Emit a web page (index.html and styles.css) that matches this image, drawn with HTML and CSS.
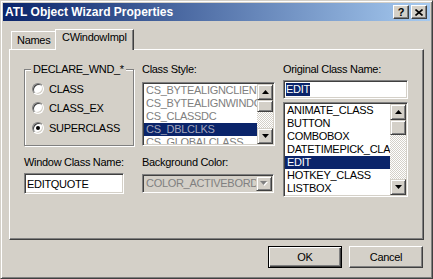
FILE: index.html
```
<!doctype html>
<html>
    <head>
        <meta name="viewport" content="width=device-width, initial-scale=1.0">
        <title>ATL Object Wizard Properties</title>
        <link rel="stylesheet" href="styles.css">
    </head>
    <body>
        <div class="window">
            <div class="titlebar">
                <span class="title">ATL Object Wizard Properties</span>
                <div class="caption-btns">
                    <span class="cap-btn">?</span>
                    <span class="cap-btn">
                        <svg width="8" height="7" viewBox="0 0 8 7"><path d="M0.5 0.5 L7.5 6.5 M7.5 0.5 L0.5 6.5" stroke="#000" stroke-width="1.6" fill="none"/></svg>
                    </span>
                </div>
            </div>

            <div class="client">
                <div class="tabs">
                    <div class="tab">Names</div>
                    <div class="tab active">CWindowImpl</div>
                </div>

                <div class="panel">
                    <!-- left column: window declaration -->
                    <div class="col col-decl">
                        <div class="group">
                            <div class="group-title">DECLARE_WND_*</div>
                            <div class="radio-list">
                                <div class="radio-row"><span class="radio"></span>CLASS</div>
                                <div class="radio-row"><span class="radio"></span>CLASS_EX</div>
                                <div class="radio-row"><span class="radio checked"></span>SUPERCLASS</div>
                            </div>
                        </div>
                        <div class="label gap-top">Window Class Name:</div>
                        <div class="edit edit-tall">EDITQUOTE</div>
                    </div>

                    <!-- middle column: class style (disabled) -->
                    <div class="col col-style">
                        <div class="label">Class Style:</div>
                        <div class="listbox disabled list-style">
                            <div class="items">
                                <div class="item">CS_BYTEALIGNCLIENT</div>
                                <div class="item">CS_BYTEALIGNWINDOW</div>
                                <div class="item">CS_CLASSDC</div>
                                <div class="item selected">CS_DBLCLKS</div>
                                <div class="item">CS_GLOBALCLASS</div>
                            </div>
                            <div class="scrollbar">
                                <div class="sb-btn"><svg width="7" height="4" viewBox="0 0 7 4"><polygon points="0,4 7,4 3.5,0" fill="#000"/></svg></div>
                                <div class="sb-thumb thumb-style"></div>
                                <div class="sb-track"></div>
                                <div class="sb-btn"><svg width="7" height="4" viewBox="0 0 7 4"><polygon points="0,0 7,0 3.5,4" fill="#000"/></svg></div>
                            </div>
                        </div>
                        <div class="label gap-top">Background Color:</div>
                        <div class="combo disabled">
                            <div class="combo-text">COLOR_ACTIVEBORDER</div>
                            <div class="sb-btn combo-btn"><svg width="8" height="5" viewBox="0 0 8 5"><polygon points="1,1 8,1 4.5,5" fill="#fff"/><polygon points="0,0 7,0 3.5,4" fill="#808080"/></svg></div>
                        </div>
                    </div>

                    <!-- right column: original class -->
                    <div class="col col-orig">
                        <div class="label">Original Class Name:</div>
                        <div class="edit edit-short"><span class="hilite">EDIT</span></div>
                        <div class="listbox list-orig">
                            <div class="items">
                                <div class="item">ANIMATE_CLASS</div>
                                <div class="item">BUTTON</div>
                                <div class="item">COMBOBOX</div>
                                <div class="item">DATETIMEPICK_CLASS</div>
                                <div class="item selected">EDIT</div>
                                <div class="item">HOTKEY_CLASS</div>
                                <div class="item">LISTBOX</div>
                            </div>
                            <div class="scrollbar">
                                <div class="sb-btn"><svg width="7" height="4" viewBox="0 0 7 4"><polygon points="0,4 7,4 3.5,0" fill="#000"/></svg></div>
                                <div class="sb-thumb thumb-orig"></div>
                                <div class="sb-track"></div>
                                <div class="sb-btn"><svg width="7" height="4" viewBox="0 0 7 4"><polygon points="0,0 7,0 3.5,4" fill="#000"/></svg></div>
                            </div>
                        </div>
                    </div>
                </div>

                <div class="buttons">
                    <div class="btn default">OK</div>
                    <div class="btn">Cancel</div>
                </div>
            </div>
        </div>
    </body>
</html>
```

FILE: styles.css
```
html,
body {
    margin: 0;
    padding: 0;
    overflow: hidden;
}

body {
    font-family: "Liberation Sans", Arial, sans-serif;
    font-size: 11px;
    letter-spacing: -0.3px;
    color: #000;
    background-color: #d4d0c8;
}

.window {
    box-sizing: border-box;
    width: 433px;
    height: 279px;
    padding: 2px;
    background-color: #d4d0c8;
    border: 1px solid;
    border-color: #d4d0c8 #404040 #404040 #d4d0c8;
    box-shadow: inset 1px 1px #fff, inset -1px -1px #808080;
}

.titlebar {
    height: 18px;
    display: flex;
    align-items: center;
    justify-content: space-between;
    padding: 0 3px 0 2px;
    background: linear-gradient(to right, #0a246a, #a6caf0);
}

.title {
    color: #fff;
    font-weight: bold;
    font-size: 12px;
    letter-spacing: 0;
}

.caption-btns {
    display: flex;
    gap: 2px;
}

.cap-btn {
    box-sizing: border-box;
    width: 16px;
    height: 14px;
    display: flex;
    align-items: center;
    justify-content: center;
    font-weight: bold;
    font-size: 11px;
    line-height: 12px;
    letter-spacing: 0;
    background-color: #d4d0c8;
    border: 1px solid;
    border-color: #fff #404040 #404040 #fff;
    box-shadow: inset -1px -1px #808080;
}

.client {
    padding: 0 6px;
}

/* tabs */

.tabs {
    display: flex;
    align-items: flex-end;
    height: 20px;
    margin-top: 8px;
    padding-left: 2px;
}

.tab {
    box-sizing: border-box;
    height: 18px;
    width: 44px;
    padding: 2px 0 0 5px;
    line-height: 13px;
    background-color: #d4d0c8;
    border: 1px solid;
    border-bottom: none;
    border-color: #fff #404040 #404040 #fff;
    border-right: none;
}

.tab.active {
    position: relative;
    z-index: 1;
    width: 79px;
    height: 21px;
    margin-bottom: -1px;
    padding: 1px 0 0 6px;
    border-right: 1px solid #404040;
    box-shadow: inset -1px 0 #808080;
}

.panel {
    box-sizing: border-box;
    height: 191px;
    display: flex;
    padding: 13px 0 0 14px;
    border: 1px solid;
    border-color: #fff #404040 #404040 #fff;
    box-shadow: inset -1px -1px #808080;
}

.col {
    display: flex;
    flex-direction: column;
}

.col-decl {
    width: 110px;
}

.col-style {
    width: 133px;
    margin-left: 8px;
}

.col-orig {
    width: 125px;
    margin-left: 8px;
}

.label {
    line-height: 13px;
    height: 13px;
    white-space: nowrap;
}

.gap-top {
    margin-top: 10px;
}

/* group box */

.group {
    box-sizing: border-box;
    height: 77px;
    margin-top: 6px;
    padding-left: 7px;
    border: 1px solid #808080;
    box-shadow: inset 1px 1px #fff, 1px 1px #fff;
}

.group-title {
    width: fit-content;
    margin: -7px 0 0 -1px;
    padding: 0 2px;
    line-height: 13px;
    background-color: #d4d0c8;
}

.radio-list {
    margin-top: 3px;
}

.radio-row {
    height: 19.5px;
    display: flex;
    align-items: center;
    gap: 5px;
}

.radio {
    box-sizing: border-box;
    width: 12px;
    height: 12px;
    border-radius: 50%;
    background-color: #fff;
    border: 1px solid;
    border-color: #808080 #fff #fff #808080;
    box-shadow: inset 1px 1px #404040, inset -1px -1px #d4d0c8;
    display: flex;
    align-items: center;
    justify-content: center;
}

.radio.checked::after {
    content: "";
    width: 4px;
    height: 4px;
    border-radius: 50%;
    background-color: #000;
}

/* sunken fields */

.edit,
.listbox,
.combo {
    box-sizing: border-box;
    background-color: #fff;
    border: 1px solid;
    border-color: #808080 #fff #fff #808080;
    box-shadow: inset 1px 1px #404040, inset -1px -1px #d4d0c8;
    padding: 1px;
}

.edit {
    display: flex;
    align-items: center;
    padding-left: 2px;
    white-space: nowrap;
}

.edit-tall {
    width: 100px;
    height: 21px;
    margin-top: 4px;
}

.edit-short {
    height: 19px;
    margin-top: 4px;
}

.hilite {
    background-color: #0a246a;
    color: #fff;
    line-height: 13px;
}

.listbox {
    display: flex;
}

.list-style {
    height: 64px;
    margin-top: 6px;
}

.list-orig {
    height: 95px;
    margin-top: 3px;
}

.items {
    flex: 1;
    overflow: hidden;
}

.item {
    height: 13px;
    line-height: 13px;
    padding-left: 2px;
    white-space: nowrap;
}

.item.selected {
    background-color: #0a246a;
    color: #fff;
}

.listbox.disabled .item {
    color: #808080;
}

.listbox.disabled .item.selected {
    color: #a3a6bb;
}

/* scrollbar */

.scrollbar {
    width: 16px;
    display: flex;
    flex-direction: column;
}

.sb-btn,
.sb-thumb {
    box-sizing: border-box;
    background-color: #d4d0c8;
    border: 1px solid;
    border-color: #d4d0c8 #404040 #404040 #d4d0c8;
    box-shadow: inset 1px 1px #fff, inset -1px -1px #808080;
}

.sb-btn {
    width: 16px;
    height: 16px;
    display: flex;
    align-items: center;
    justify-content: center;
}

.sb-btn svg {
    display: block;
}

.thumb-style {
    height: 12px;
}

.thumb-orig {
    height: 15px;
}

.sb-track {
    flex: 1;
    background: repeating-conic-gradient(#d4d0c8 0 25%, #fff 0 50%) 0 0 / 2px 2px;
}

/* combo */

.combo {
    display: flex;
    height: 19px;
    margin-top: 5px;
    width: 132px;
}

.combo.disabled {
    background-color: #d4d0c8;
}

.combo-text {
    flex: 1;
    overflow: hidden;
    white-space: nowrap;
    line-height: 15px;
    padding-left: 2px;
    color: #808080;
}

.combo-btn {
    height: 15px;
}

/* dialog buttons */

.buttons {
    display: flex;
    justify-content: flex-end;
    gap: 7px;
    margin-top: 6px;
    padding-right: 1px;
}

.btn {
    box-sizing: border-box;
    width: 74px;
    height: 22px;
    display: flex;
    align-items: center;
    justify-content: center;
    background-color: #d4d0c8;
    border: 1px solid;
    border-color: #fff #404040 #404040 #fff;
    box-shadow: inset -1px -1px #808080;
}

.btn.default {
    border-color: #000;
    box-shadow: inset 1px 1px #fff, inset -1px -1px #404040, inset -2px -2px #808080;
}
```
